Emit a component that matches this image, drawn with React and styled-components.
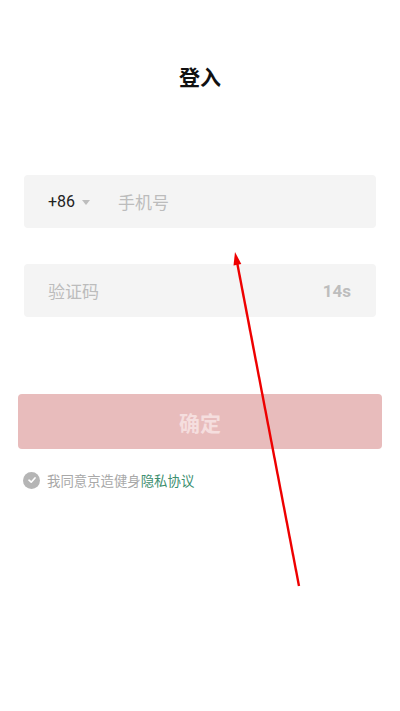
import React from 'react';
import styled, { createGlobalStyle } from 'styled-components';

const Global = createGlobalStyle`
  html, body {
    margin: 0;
    padding: 0;
    background: #fff;
  }
  body {
    font-family: "Noto Sans CJK SC", "Noto Sans", sans-serif;
  }
`;

const Page = styled.div`
  position: relative;
  width: 400px;
  height: 711px;
  overflow: hidden;
  background: #fff;
`;

const Title = styled.h1`
  margin: 0;
  padding-top: 60px;
  text-align: center;
  font-size: 21px;
  line-height: 32px;
  font-weight: 700;
  color: #111;
`;

const Form = styled.div`
  display: flex;
  flex-direction: column;
  padding: 0 24px;
  margin-top: 83px;
`;

const Field = styled.div`
  display: flex;
  align-items: center;
  height: 53px;
  padding: 0 25px 0 24px;
  border-radius: 4px;
  background: #f4f4f4;
  margin-top: ${(p) => p.gap || 0}px;
`;

const Prefix = styled.div`
  display: flex;
  align-items: center;
  font-family: Roboto, "Noto Sans", sans-serif;
  font-size: 16px;
  color: #222;
  margin-right: 28px;
`;

const Caret = styled.span`
  width: 0;
  height: 0;
  margin-left: 7px;
  margin-top: 1px;
  border-left: 4px solid transparent;
  border-right: 4px solid transparent;
  border-top: 5px solid #bdbdbd;
`;

const Placeholder = styled.span`
  flex: 1;
  font-size: 17px;
  color: #bcbcbc;
`;

const Countdown = styled.span`
  font-family: Roboto, "Noto Sans", sans-serif;
  font-size: 17px;
  font-weight: 700;
  color: #bdbdbd;
`;

const Submit = styled.button`
  margin: 77px -6px 0;
  height: 55px;
  border: none;
  border-radius: 4px;
  background: #e8bcbc;
  color: #f5dede;
  font-family: "Noto Sans CJK SC", sans-serif;
  font-size: 21px;
  font-weight: 700;
`;

const Agree = styled.div`
  display: flex;
  align-items: center;
  margin: 21px 0 0 -1px;
  font-size: 13.4px;
  color: #a8a8a8;
`;

const Check = styled.span`
  display: flex;
  align-items: center;
  justify-content: center;
  width: 17px;
  height: 17px;
  border-radius: 50%;
  background: #b5b5b5;
  margin-right: 7px;
`;

const Link = styled.span`
  color: #3d8f70;
`;

const Annotation = styled.svg`
  position: absolute;
  left: 0;
  top: 0;
  pointer-events: none;
`;

export default function App() {
  return (
    <Page>
      <Global />
      <Title>登入</Title>
      <Form>
        <Field>
          <Prefix>
            +86
            <Caret />
          </Prefix>
          <Placeholder>手机号</Placeholder>
        </Field>
        <Field gap={36}>
          <Placeholder>验证码</Placeholder>
          <Countdown>14s</Countdown>
        </Field>
        <Submit>确定</Submit>
        <Agree>
          <Check>
            <svg width="10" height="10" viewBox="0 0 10 10">
              <path d="M2 5.2 L4.2 7.2 L8 3" fill="none" stroke="#fff" strokeWidth="1.7" strokeLinecap="round" strokeLinejoin="round" />
            </svg>
          </Check>
          我同意京造健身<Link>隐私协议</Link>
        </Agree>
      </Form>
      <Annotation width="400" height="711" viewBox="0 0 400 711">
        <line x1="299" y1="586" x2="237.2" y2="263" stroke="#ee0000" strokeWidth="2.4" />
        <polygon points="235,252 241.3,264 233.5,265.5" fill="#ee0000" />
      </Annotation>
    </Page>
  );
}
